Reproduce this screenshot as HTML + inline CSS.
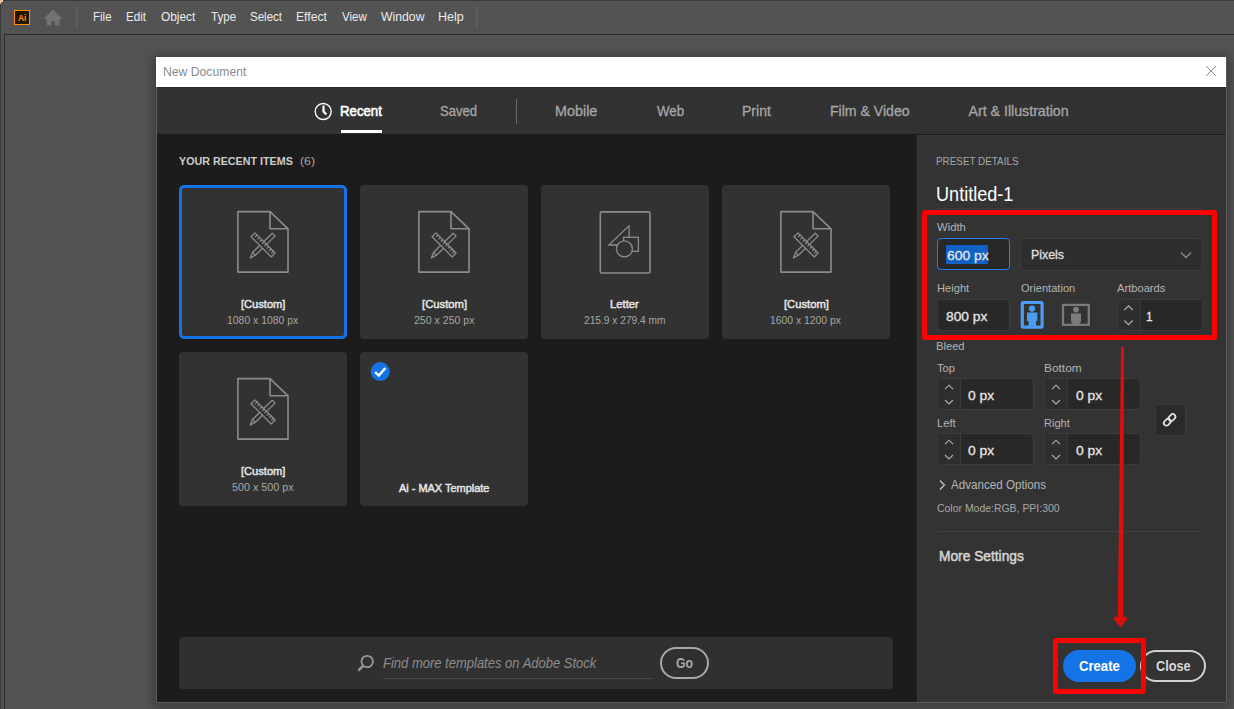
<!DOCTYPE html>
<html><head><meta charset="utf-8">
<style>
*{margin:0;padding:0;box-sizing:border-box}
html,body{width:1234px;height:709px;overflow:hidden;background:#535353;font-family:"Liberation Sans",sans-serif}
.a{position:absolute}
.t{position:absolute;white-space:nowrap;line-height:1;transform-origin:0 0}
.tile{width:168px;height:154px;background:#323232;border-radius:4px}
.tile.sel{border:3px solid #1473e6;border-radius:5px}
.inp{position:absolute;background:#282828;border:1px solid #3b3b3b;border-radius:4px}
</style></head><body>
<!-- app frame -->
<div class="a" style="left:0;top:0;width:1234px;height:1px;background:#3a3a3a"></div>
<div class="a" style="left:0;top:0;width:1px;height:709px;background:#3c3c3c"></div>
<div class="a" style="left:4px;top:34px;width:1230px;height:1px;background:#2a2a2a"></div>
<div class="a" style="left:4px;top:34px;width:1px;height:675px;background:#2a2a2a"></div>
<div class="a" style="left:14px;top:10px;width:16px;height:15px;border:1.6px solid #ff8f0a;background:#261300"></div>
<div class="t" style="left:17.6px;top:13.4px;color:#ff8f0a;font-size:9.6px;font-weight:bold;transform:scaleX(.88)">Ai</div>
<div class="a" style="left:0;top:0;width:3px;height:2px;background:#f2bca8"></div><div class="a" style="left:0;top:2px;width:1px;height:2px;background:#f2bca8"></div>
<svg class="a" style="left:43px;top:9px" width="20" height="17" viewBox="0 0 20 17"><path d="M10 1 L19 9.5 L16 9.5 L16 16 L12 16 L12 11.5 L8 11.5 L8 16 L4 16 L4 9.5 L1 9.5 Z" fill="#727272" stroke="#727272" stroke-width=".8" stroke-linejoin="round"/></svg>
<div class="a" style="left:76px;top:7px;width:2px;height:20px;background:#5e5e5e"></div>
<div class="a" style="left:476px;top:7px;width:2px;height:20px;background:#5e5e5e"></div>

<!-- dialog -->
<div class="a" style="left:156px;top:57px;width:1071px;height:646px;background:#5a5a5a;box-shadow:0 2px 10px 3px rgba(0,0,0,.28)"></div>
<div class="a" style="left:156px;top:57px;width:1070px;height:30px;background:#fff"></div>
<svg class="a" style="left:1205px;top:65px" width="12" height="12" viewBox="0 0 12 12"><path d="M1 1L11 11M11 1L1 11" stroke="#8a8a8a" stroke-width="1"/></svg>
<div class="a" style="left:157px;top:87px;width:1069px;height:47px;background:#323232"></div>
<div class="a" style="left:157px;top:87px;width:1069px;height:1px;background:#2a2a2a"></div>
<div class="a" style="left:157px;top:134px;width:760px;height:568px;background:#1c1c1c"></div>
<div class="a" style="left:917px;top:134px;width:309px;height:1px;background:#1c1c1c"></div>
<div class="a" style="left:917px;top:135px;width:309px;height:567px;background:#333333;border-top:1px solid #393939;border-left:1px solid #393939"></div>

<!-- tabs -->
<svg class="a" style="left:313px;top:101px" width="20" height="21" viewBox="0 0 20 21"><circle cx="10.2" cy="10.5" r="8.0" fill="none" stroke="#fff" stroke-width="1.35"/><path d="M10.5 4.4 V10.6 L13.4 13.4" fill="none" stroke="#fff" stroke-width="2.2"/></svg>
<div class="a" style="left:341px;top:130px;width:41px;height:3px;background:#fff"></div>
<div class="a" style="left:516px;top:99px;width:1px;height:25px;background:#6a6a6a"></div>

<!-- left content -->
<div class="a tile sel" style="left:179px;top:185px"></div><div class="a tile" style="left:360px;top:185px"></div><div class="a tile" style="left:541px;top:185px"></div><div class="a tile" style="left:722px;top:185px"></div><div class="a tile" style="left:179px;top:352px"></div><div class="a tile" style="left:360px;top:352px"></div>
<svg class="a" style="left:236px;top:210px" width="54" height="64" viewBox="0 0 54 64">
<g fill="none" stroke="#8c8c8c" stroke-width="1.6" stroke-linejoin="round">
<path d="M1.9 1.6 H34 L52 18.8 V62.1 H1.9 Z"/><path d="M34 1.6 V18.8 H52"/>
</g>
<g fill="none" stroke="#8c8c8c" stroke-width="1.3" stroke-linejoin="round">
<path d="M39.06 26.11 L36.24 23.29 L16.59 42.34 L14.3 48 L19.41 45.16 Z"/><path d="M16.59 42.34 L19.41 45.16"/>
<path d="M15.08 26.76 L18.96 22.88 L39.12 43.04 L35.24 46.92 Z" fill="#323232"/>
<path d="M21.10 25.05 L19.60 26.55 M23.42 27.37 L21.92 28.87 M25.74 29.69 L24.24 31.19 M28.06 32.01 L26.56 33.51 M30.38 34.33 L28.88 35.83 M32.70 36.65 L31.20 38.15 M35.02 38.97 L33.52 40.47 M37.34 41.29 L35.84 42.79" stroke-linecap="round"/>
</g></svg><svg class="a" style="left:417px;top:210px" width="54" height="64" viewBox="0 0 54 64">
<g fill="none" stroke="#8c8c8c" stroke-width="1.6" stroke-linejoin="round">
<path d="M1.9 1.6 H34 L52 18.8 V62.1 H1.9 Z"/><path d="M34 1.6 V18.8 H52"/>
</g>
<g fill="none" stroke="#8c8c8c" stroke-width="1.3" stroke-linejoin="round">
<path d="M39.06 26.11 L36.24 23.29 L16.59 42.34 L14.3 48 L19.41 45.16 Z"/><path d="M16.59 42.34 L19.41 45.16"/>
<path d="M15.08 26.76 L18.96 22.88 L39.12 43.04 L35.24 46.92 Z" fill="#323232"/>
<path d="M21.10 25.05 L19.60 26.55 M23.42 27.37 L21.92 28.87 M25.74 29.69 L24.24 31.19 M28.06 32.01 L26.56 33.51 M30.38 34.33 L28.88 35.83 M32.70 36.65 L31.20 38.15 M35.02 38.97 L33.52 40.47 M37.34 41.29 L35.84 42.79" stroke-linecap="round"/>
</g></svg><svg class="a" style="left:779px;top:210px" width="54" height="64" viewBox="0 0 54 64">
<g fill="none" stroke="#8c8c8c" stroke-width="1.6" stroke-linejoin="round">
<path d="M1.9 1.6 H34 L52 18.8 V62.1 H1.9 Z"/><path d="M34 1.6 V18.8 H52"/>
</g>
<g fill="none" stroke="#8c8c8c" stroke-width="1.3" stroke-linejoin="round">
<path d="M39.06 26.11 L36.24 23.29 L16.59 42.34 L14.3 48 L19.41 45.16 Z"/><path d="M16.59 42.34 L19.41 45.16"/>
<path d="M15.08 26.76 L18.96 22.88 L39.12 43.04 L35.24 46.92 Z" fill="#323232"/>
<path d="M21.10 25.05 L19.60 26.55 M23.42 27.37 L21.92 28.87 M25.74 29.69 L24.24 31.19 M28.06 32.01 L26.56 33.51 M30.38 34.33 L28.88 35.83 M32.70 36.65 L31.20 38.15 M35.02 38.97 L33.52 40.47 M37.34 41.29 L35.84 42.79" stroke-linecap="round"/>
</g></svg><svg class="a" style="left:236px;top:377px" width="54" height="64" viewBox="0 0 54 64">
<g fill="none" stroke="#8c8c8c" stroke-width="1.6" stroke-linejoin="round">
<path d="M1.9 1.6 H34 L52 18.8 V62.1 H1.9 Z"/><path d="M34 1.6 V18.8 H52"/>
</g>
<g fill="none" stroke="#8c8c8c" stroke-width="1.3" stroke-linejoin="round">
<path d="M39.06 26.11 L36.24 23.29 L16.59 42.34 L14.3 48 L19.41 45.16 Z"/><path d="M16.59 42.34 L19.41 45.16"/>
<path d="M15.08 26.76 L18.96 22.88 L39.12 43.04 L35.24 46.92 Z" fill="#323232"/>
<path d="M21.10 25.05 L19.60 26.55 M23.42 27.37 L21.92 28.87 M25.74 29.69 L24.24 31.19 M28.06 32.01 L26.56 33.51 M30.38 34.33 L28.88 35.83 M32.70 36.65 L31.20 38.15 M35.02 38.97 L33.52 40.47 M37.34 41.29 L35.84 42.79" stroke-linecap="round"/>
</g></svg><svg class="a" style="left:598px;top:210px" width="54" height="64" viewBox="0 0 54 64">
<g stroke="#8c8c8c" stroke-width="1.6" stroke-linejoin="round" fill="none">
<rect x="2.3" y="1.9" width="49.7" height="61.1" rx="1.5"/>
</g>
<g stroke="#8c8c8c" stroke-width="1.3" stroke-linejoin="miter">
<path d="M31.1 15.6 V30 M31.1 15.6 L10.8 35 H20" fill="none"/>
<rect x="25.6" y="27.3" width="14.8" height="14" fill="#323232"/>
<circle cx="26.4" cy="38.9" r="8" fill="#323232"/>
</g></svg>
<svg class="a" style="left:370px;top:362px" width="20" height="20" viewBox="0 0 20 20"><circle cx="10.2" cy="9.6" r="9.5" fill="#1473e6"/><path d="M5.2 10.2 L8.8 13.6 L15.4 6" fill="none" stroke="#fff" stroke-width="2.4"/></svg>
<div class="a" style="left:179px;top:637px;width:714px;height:52px;background:#303030;border-radius:4px"></div>
<svg class="a" style="left:356px;top:653px" width="20" height="20" viewBox="0 0 20 20"><circle cx="11.2" cy="8.5" r="5.7" fill="none" stroke="#9a9a9a" stroke-width="1.7"/><path d="M7.2 12.6 L2.4 17.6" stroke="#9a9a9a" stroke-width="2.4"/></svg>
<div class="a" style="left:383px;top:678px;width:270px;height:1px;background:#4a4a4a"></div>
<div class="a" style="left:660px;top:647px;width:49px;height:32px;border:2px solid #a8a8a8;border-radius:16px"></div>

<!-- right panel -->
<div class="a" style="left:937px;top:208px;width:266px;height:1px;background:#404040"></div>
<div class="inp" style="left:937px;top:238px;width:73px;height:32px;border-color:#2680eb"></div>
<div class="a" style="left:946px;top:245px;width:42px;height:19px;background:#0f62c4"></div>
<div class="inp" style="left:1020px;top:238px;width:183px;height:33px;background:#2e2e2e"></div>
<svg class="a" style="left:1180px;top:251px" width="12" height="8" viewBox="0 0 12 8"><path d="M1 1.5 L6 6.5 L11 1.5" fill="none" stroke="#8e8e8e" stroke-width="1.3"/></svg>
<div class="inp" style="left:937px;top:299px;width:73px;height:32px"></div>
<svg class="a" style="left:1020px;top:300px" width="24" height="30" viewBox="0 0 24 30"><rect x="2.3" y="2.5" width="19.8" height="24.7" rx="0.8" fill="none" stroke="#4b9cf5" stroke-width="3.2"/><circle cx="12" cy="8.6" r="3.1" fill="#4b9cf5"/><path d="M7 12.5 H17.3 V21 H16 V28 H8.6 V21 H7 Z" fill="#4b9cf5"/></svg>
<svg class="a" style="left:1061px;top:303px" width="30" height="24" viewBox="0 0 30 24"><rect x="2" y="1.9" width="25.8" height="19.9" fill="none" stroke="#7a7a7a" stroke-width="2.3"/><circle cx="15" cy="6.6" r="2.9" fill="#7c7c7c"/><path d="M10 10.5 H20 V19.2 H18.8 V22 H11.3 V19.2 H10 Z" fill="#7c7c7c"/></svg>
<div class="inp" style="left:1117px;top:299px;width:86px;height:32px"></div>
<div class="a" style="left:1118px;top:300px;width:22px;height:30px;background:#2e2e2e;border-radius:3px 0 0 3px"></div>
<div class="a" style="left:1140px;top:300px;width:1px;height:30px;background:#3a3a3a"></div>
<svg class="a" style="left:1123px;top:304px" width="12" height="23" viewBox="0 0 12 23"><path d="M1.3 6 L5.5 1.8 L9.7 6 M1.3 16.5 L5.5 20.7 L9.7 16.5" fill="none" stroke="#acacac" stroke-width="1.15"/></svg>
<div class="inp" style="left:937px;top:378px;width:97px;height:32px"></div>
<div class="a" style="left:938px;top:379px;width:22px;height:30px;background:#2e2e2e;border-radius:3px 0 0 3px"></div>
<div class="a" style="left:960px;top:379px;width:1px;height:30px;background:#3a3a3a"></div>
<svg class="a" style="left:944px;top:384px" width="10" height="22" viewBox="0 0 10 22"><path d="M1 5.2 L5 1.2 L9 5.2 M1 16 L5 20 L9 16" fill="none" stroke="#acacac" stroke-width="1.15"/></svg>
<div class="inp" style="left:1044px;top:378px;width:97px;height:32px"></div>
<div class="a" style="left:1045px;top:379px;width:22px;height:30px;background:#2e2e2e;border-radius:3px 0 0 3px"></div>
<div class="a" style="left:1067px;top:379px;width:1px;height:30px;background:#3a3a3a"></div>
<svg class="a" style="left:1051px;top:384px" width="10" height="22" viewBox="0 0 10 22"><path d="M1 5.2 L5 1.2 L9 5.2 M1 16 L5 20 L9 16" fill="none" stroke="#acacac" stroke-width="1.15"/></svg>
<div class="inp" style="left:937px;top:433px;width:97px;height:32px"></div>
<div class="a" style="left:938px;top:434px;width:22px;height:30px;background:#2e2e2e;border-radius:3px 0 0 3px"></div>
<div class="a" style="left:960px;top:434px;width:1px;height:30px;background:#3a3a3a"></div>
<svg class="a" style="left:944px;top:439px" width="10" height="22" viewBox="0 0 10 22"><path d="M1 5.2 L5 1.2 L9 5.2 M1 16 L5 20 L9 16" fill="none" stroke="#acacac" stroke-width="1.15"/></svg>
<div class="inp" style="left:1044px;top:433px;width:97px;height:32px"></div>
<div class="a" style="left:1045px;top:434px;width:22px;height:30px;background:#2e2e2e;border-radius:3px 0 0 3px"></div>
<div class="a" style="left:1067px;top:434px;width:1px;height:30px;background:#3a3a3a"></div>
<svg class="a" style="left:1051px;top:439px" width="10" height="22" viewBox="0 0 10 22"><path d="M1 5.2 L5 1.2 L9 5.2 M1 16 L5 20 L9 16" fill="none" stroke="#acacac" stroke-width="1.15"/></svg>
<div class="inp" style="left:1155px;top:404px;width:31px;height:32px;background:#2a2a2a"></div>
<svg class="a" style="left:1155px;top:404px" width="31" height="32" viewBox="0 0 31 32"><g fill="none" stroke="#e6e6e6" stroke-width="1.7" transform="rotate(-45 14.6 15.9)"><rect x="14.1" y="13.3" width="7.6" height="5.2" rx="2.6"/><rect x="7.5" y="13.3" width="7.6" height="5.2" rx="2.6"/></g></svg>
<svg class="a" style="left:938px;top:479px" width="10" height="12" viewBox="0 0 10 12"><path d="M2 1.6 L6.4 6 L2 10.4" fill="none" stroke="#b4b4b4" stroke-width="1.5"/></svg>
<div class="a" style="left:937px;top:531px;width:266px;height:1px;background:#404040"></div>
<div class="a" style="left:1063px;top:650px;width:73px;height:32px;background:#1473e6;border-radius:16px"></div>
<div class="a" style="left:1140px;top:650px;width:66px;height:32px;border:2px solid #d0d0d0;border-radius:16px"></div>

<div class="t" style="left:92.68px;top:11.00px;font-size:12.5px;color:#ececec;transform:scaleX(0.9211);">File</div>
<div class="t" style="left:125.77px;top:11.00px;font-size:12.5px;color:#ececec;transform:scaleX(0.9286);">Edit</div>
<div class="t" style="left:160.80px;top:11.00px;font-size:12.5px;color:#ececec;transform:scaleX(0.9514);">Object</div>
<div class="t" style="left:211.00px;top:11.00px;font-size:12.5px;color:#ececec;transform:scaleX(0.9259);">Type</div>
<div class="t" style="left:249.78px;top:11.00px;font-size:12.5px;color:#ececec;transform:scaleX(0.9206);">Select</div>
<div class="t" style="left:296.03px;top:11.00px;font-size:12.5px;color:#ececec;transform:scaleX(0.9742);">Effect</div>
<div class="t" style="left:342.00px;top:11.00px;font-size:12.5px;color:#ececec;transform:scaleX(0.9259);">View</div>
<div class="t" style="left:381.00px;top:11.00px;font-size:12.5px;color:#ececec;transform:scaleX(0.9778);">Window</div>
<div class="t" style="left:438.00px;top:11.00px;font-size:12.5px;color:#ececec;">Help</div>
<div class="t" style="left:163.48px;top:66.00px;font-size:12px;color:#8a8a8a;transform:scaleX(1.0160);">New Document</div>
<div class="t" style="left:340.07px;top:104.00px;font-size:14.2px;color:#ffffff;transform:scaleX(0.9318);-webkit-text-stroke:0.6px #ffffff">Recent</div>
<div class="t" style="left:440.48px;top:104.00px;font-size:14.2px;color:#a6a6a6;transform:scaleX(0.9231);-webkit-text-stroke:0.3px #a6a6a6">Saved</div>
<div class="t" style="left:555.19px;top:104.00px;font-size:14.2px;color:#a6a6a6;transform:scaleX(1.0122);-webkit-text-stroke:0.3px #a6a6a6">Mobile</div>
<div class="t" style="left:656.80px;top:104.00px;font-size:14.2px;color:#a6a6a6;transform:scaleX(0.9379);-webkit-text-stroke:0.3px #a6a6a6">Web</div>
<div class="t" style="left:742.31px;top:104.00px;font-size:14.2px;color:#a6a6a6;transform:scaleX(0.9897);-webkit-text-stroke:0.3px #a6a6a6">Print</div>
<div class="t" style="left:829.51px;top:104.00px;font-size:14.2px;color:#a6a6a6;transform:scaleX(0.9924);-webkit-text-stroke:0.3px #a6a6a6">Film &amp; Video</div>
<div class="t" style="left:968.50px;top:104.00px;font-size:14.2px;color:#a6a6a6;-webkit-text-stroke:0.3px #a6a6a6">Art &amp; Illustration</div>
<div class="t" style="left:179.30px;top:156.00px;font-size:10.6px;color:#cdcdcd;font-weight:bold;transform:scaleX(1.0125);">YOUR RECENT ITEMS</div>
<div class="t" style="left:300.20px;top:156.00px;font-size:10.6px;color:#a8a8a8;transform:scaleX(1.1692);">(6)</div>
<div class="t" style="left:241.20px;top:298.00px;font-size:11.7px;color:#e8e8e8;transform:scaleX(0.9500);-webkit-text-stroke:0.45px #e8e8e8">[Custom]</div>
<div class="t" style="left:227.02px;top:315.00px;font-size:10.6px;color:#a6a6a6;transform:scaleX(0.9833);">1080 x 1080 px</div>
<div class="t" style="left:421.90px;top:298.00px;font-size:11.7px;color:#e8e8e8;transform:scaleX(0.9630);-webkit-text-stroke:0.45px #e8e8e8">[Custom]</div>
<div class="t" style="left:413.90px;top:315.00px;font-size:10.6px;color:#a6a6a6;">250 x 250 px</div>
<div class="t" style="left:610.24px;top:298.00px;font-size:11.7px;color:#e8e8e8;transform:scaleX(0.9621);-webkit-text-stroke:0.45px #e8e8e8">Letter</div>
<div class="t" style="left:584.40px;top:315.00px;font-size:10.6px;color:#a6a6a6;transform:scaleX(0.9612);">215.9 x 279.4 mm</div>
<div class="t" style="left:784.10px;top:298.00px;font-size:11.7px;color:#e8e8e8;transform:scaleX(0.9587);-webkit-text-stroke:0.45px #e8e8e8">[Custom]</div>
<div class="t" style="left:769.92px;top:315.00px;font-size:10.6px;color:#a6a6a6;transform:scaleX(0.9778);">1600 x 1200 px</div>
<div class="t" style="left:241.20px;top:465.00px;font-size:11.7px;color:#e8e8e8;transform:scaleX(0.9500);-webkit-text-stroke:0.45px #e8e8e8">[Custom]</div>
<div class="t" style="left:232.40px;top:482.00px;font-size:10.6px;color:#a6a6a6;transform:scaleX(1.0164);">500 x 500 px</div>
<div class="t" style="left:398.90px;top:483.00px;font-size:11.2px;color:#e8e8e8;transform:scaleX(0.9783);-webkit-text-stroke:0.45px #e8e8e8">Ai - MAX Template</div>
<div class="t" style="left:383.00px;top:656.00px;font-size:14px;color:#8c8c8c;font-style:italic;transform:scaleX(0.9283);">Find more templates on Adobe Stock</div>
<div class="t" style="left:676.40px;top:656.00px;font-size:14.2px;color:#a8a8a8;font-weight:bold;transform:scaleX(0.8650);">Go</div>
<div class="t" style="left:936.49px;top:156.00px;font-size:10.9px;color:#a8a8a8;transform:scaleX(0.9067);">PRESET DETAILS</div>
<div class="t" style="left:936.11px;top:184.00px;font-size:20.4px;color:#ffffff;transform:scaleX(0.8872);">Untitled-1</div>
<div class="t" style="left:937.30px;top:221.70px;font-size:10.6px;color:#b4b4b4;transform:scaleX(1.0630);">Width</div>
<div class="t" style="left:946.70px;top:248.70px;font-size:13.7px;color:#e4e4e4;transform:scaleX(1.0146);-webkit-text-stroke:0.3px #e4e4e4">600 px</div>
<div class="t" style="left:1031.39px;top:247.80px;font-size:13.7px;color:#e0e0e0;transform:scaleX(0.9056);-webkit-text-stroke:0.3px #e0e0e0">Pixels</div>
<div class="t" style="left:936.75px;top:283.00px;font-size:10.6px;color:#b4b4b4;transform:scaleX(1.0500);">Height</div>
<div class="t" style="left:1020.60px;top:283.00px;font-size:10.6px;color:#b4b4b4;transform:scaleX(1.0462);">Orientation</div>
<div class="t" style="left:1116.60px;top:283.00px;font-size:10.6px;color:#b4b4b4;transform:scaleX(1.0522);">Artboards</div>
<div class="t" style="left:946.40px;top:309.60px;font-size:13.7px;color:#e4e4e4;transform:scaleX(1.0073);-webkit-text-stroke:0.3px #e4e4e4">800 px</div>
<div class="t" style="left:1146.33px;top:309.80px;font-size:13.7px;color:#e4e4e4;transform:scaleX(0.8667);-webkit-text-stroke:0.3px #e4e4e4">1</div>
<div class="t" style="left:936.45px;top:341.00px;font-size:10.6px;color:#b4b4b4;transform:scaleX(1.0538);">Bleed</div>
<div class="t" style="left:937.10px;top:362.90px;font-size:10.6px;color:#b4b4b4;transform:scaleX(1.0529);">Top</div>
<div class="t" style="left:1043.88px;top:362.80px;font-size:10.6px;color:#b4b4b4;transform:scaleX(1.1219);">Bottom</div>
<div class="t" style="left:968.20px;top:388.80px;font-size:13.7px;color:#e4e4e4;transform:scaleX(1.0115);-webkit-text-stroke:0.3px #e4e4e4">0 px</div>
<div class="t" style="left:1075.70px;top:388.80px;font-size:13.7px;color:#e4e4e4;transform:scaleX(1.0115);-webkit-text-stroke:0.3px #e4e4e4">0 px</div>
<div class="t" style="left:936.64px;top:417.60px;font-size:10.6px;color:#b4b4b4;transform:scaleX(1.0588);">Left</div>
<div class="t" style="left:1043.85px;top:417.50px;font-size:10.6px;color:#b4b4b4;transform:scaleX(1.0458);">Right</div>
<div class="t" style="left:968.20px;top:443.90px;font-size:13.7px;color:#e4e4e4;transform:scaleX(1.0115);-webkit-text-stroke:0.3px #e4e4e4">0 px</div>
<div class="t" style="left:1075.70px;top:443.90px;font-size:13.7px;color:#e4e4e4;transform:scaleX(1.0115);-webkit-text-stroke:0.3px #e4e4e4">0 px</div>
<div class="t" style="left:950.90px;top:478.80px;font-size:12px;color:#b4b4b4;transform:scaleX(0.9684);">Advanced Options</div>
<div class="t" style="left:937.30px;top:502.70px;font-size:10.75px;color:#a8a8a8;transform:scaleX(0.9722);">Color Mode:RGB, PPI:300</div>
<div class="t" style="left:938.68px;top:547.80px;font-size:15px;color:#d2d2d2;transform:scaleX(0.9165);-webkit-text-stroke:0.55px #d2d2d2">More Settings</div>
<div class="t" style="left:1079.00px;top:659.20px;font-size:14px;color:#ffffff;font-weight:bold;transform:scaleX(0.9364);">Create</div>
<div class="t" style="left:1155.50px;top:659.20px;font-size:14px;color:#d8d8d8;font-weight:bold;transform:scaleX(0.9079);">Close</div>

<!-- annotations -->
<div class="a" style="left:922px;top:210px;width:295px;height:130px;border:5px solid #ff0000;border-radius:3px"></div>
<div class="a" style="left:1053px;top:638px;width:93px;height:56px;border:5px solid #ff0000;border-radius:3px"></div>
<svg class="a" style="left:1100px;top:340px" width="40" height="300" viewBox="1100 340 40 300"><path d="M1121 347 L1124 347 L1123.2 621 L1117.8 621 Z" fill="#e00d0d"/><path d="M1115.6 618.4 L1120.4 624.6 L1125.2 618.4" fill="none" stroke="#e00d0d" stroke-width="3.6" stroke-linejoin="miter" stroke-linecap="round"/></svg>
</body></html>
